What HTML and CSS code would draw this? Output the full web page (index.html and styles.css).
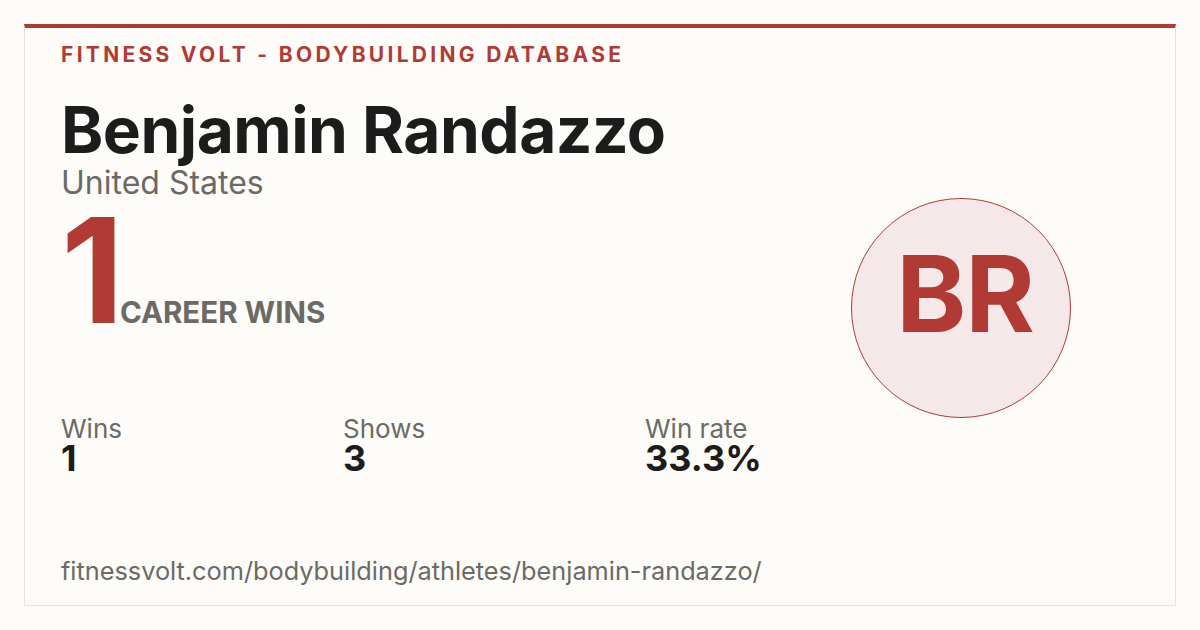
FILE: index.html
```html
<!DOCTYPE html>
<html>
<head>
<meta charset="utf-8">
<link rel="stylesheet" href="styles.css">
</head>
<body>
<div class="card">
  <div class="main">
    <div class="brand">FITNESS VOLT - BODYBUILDING DATABASE</div>
    <h1 class="name">Benjamin Randazzo</h1>
    <div class="country">United States</div>
    <div class="wins">
      <span class="big">1</span>
      <span class="wins-label">CAREER WINS</span>
    </div>
    <div class="stats">
      <div class="stat"><div class="stat-label">Wins</div><div class="stat-value">1</div></div>
      <div class="stat"><div class="stat-label">Shows</div><div class="stat-value">3</div></div>
      <div class="stat"><div class="stat-label">Win rate</div><div class="stat-value">33.3%</div></div>
    </div>
    <div class="url">fitnessvolt.com/bodybuilding/athletes/benjamin-randazzo/</div>
  </div>
  <div class="side">
    <div class="avatar">BR</div>
  </div>
</div>
</body>
</html>
```
FILE: styles.css
```css
html, body {
  margin: 0;
  padding: 0;
  background: #fdfcf8;
}
body {
  width: 1200px;
  height: 630px;
  padding: 24px;
  box-sizing: border-box;
  font-family: Inter, "Open Sans", sans-serif;
}
.card {
  box-sizing: border-box;
  height: 582px;
  border: 1px solid #e6e3dd;
  border-top: 4px solid #b23a35;
  background: #fdfcf8;
  display: flex;
  padding: 0 36px;
}
.main {
  flex: 1;
  display: flex;
  flex-direction: column;
}
.brand {
  margin-top: 14px;
  font-size: 21px;
  line-height: 26px;
  font-weight: 700;
  letter-spacing: 3.3px;
  color: #b23a35;
}
.name {
  margin: 27px 0 0;
  font-size: 64px;
  line-height: 70px;
  font-weight: 700;
  color: #1c1c1c;
  letter-spacing: -0.5px;
}
.country {
  font-size: 32px;
  line-height: 36px;
  color: #6b6a66;
  margin-top: 0;
}
.wins {
  display: flex;
  align-items: baseline;
  margin-top: 14px;
}
.big {
  font-size: 146px;
  line-height: 110px;
  font-weight: 700;
  color: #b23a35;
  letter-spacing: -4px;
}
.wins-label {
  font-size: 29.5px;
  font-weight: 700;
  color: #6b6a66;
}
.stats {
  display: grid;
  grid-template-columns: 282px 302px auto;
  margin-top: 86px;
}
.stat-label {
  font-size: 26px;
  line-height: 26px;
  color: #6b6a66;
}
.stat-value {
  font-size: 36px;
  line-height: 30px;
  font-weight: 700;
  color: #1c1c1c;
  margin-top: 1px;
}
.url {
  margin-top: 84px;
  font-size: 25.3px;
  line-height: 28px;
  color: #6b6a66;
}
.side {
  display: flex;
  align-items: center;
  padding-right: 68px;
  padding-bottom: 18px;
}
.avatar {
  width: 220px;
  height: 220px;
  box-sizing: border-box;
  border: 1px solid #b23a35;
  border-radius: 50%;
  background: #f4e8e8;
  color: #b23a35;
  font-size: 106px;
  font-weight: 700;
  letter-spacing: -1px;
  display: flex;
  align-items: center;
  justify-content: center;
  padding: 0 0 28px 8px;
}
```
